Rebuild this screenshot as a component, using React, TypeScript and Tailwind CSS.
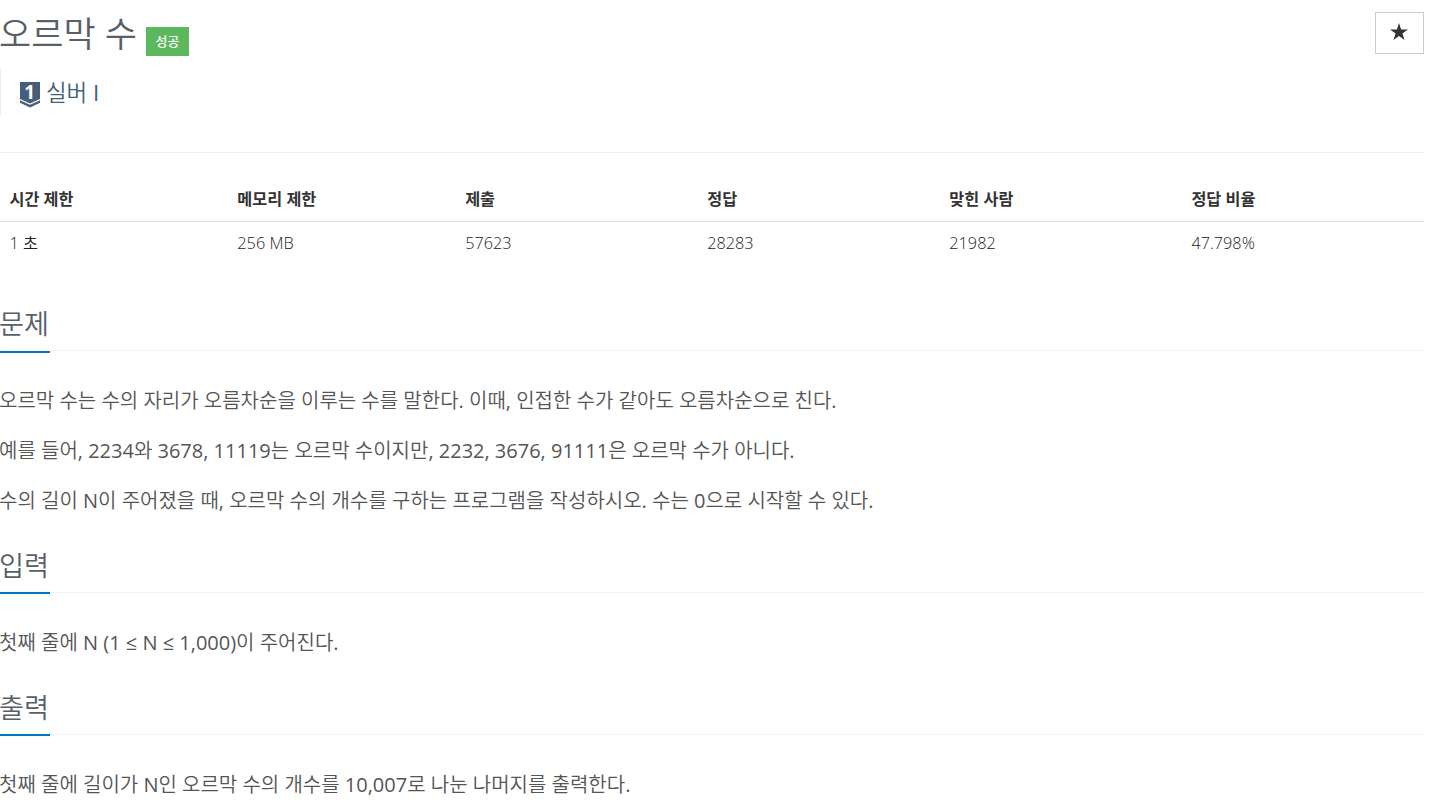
import React from "react";

interface Section {
  title: string;
  paragraphs: string[];
}

const stats = [
  { label: "시간 제한", value: "1 초", width: "w-[16%]" },
  { label: "메모리 제한", value: "256 MB", width: "w-[16%]" },
  { label: "제출", value: "57623", width: "w-[17%]" },
  { label: "정답", value: "28283", width: "w-[17%]" },
  { label: "맞힌 사람", value: "21982", width: "w-[17%]" },
  { label: "정답 비율", value: "47.798%", width: "w-[17%]" },
];

const sections: Section[] = [
  {
    title: "문제",
    paragraphs: [
      "오르막 수는 수의 자리가 오름차순을 이루는 수를 말한다. 이때, 인접한 수가 같아도 오름차순으로 친다.",
      "예를 들어, 2234와 3678, 11119는 오르막 수이지만, 2232, 3676, 91111은 오르막 수가 아니다.",
      "수의 길이 N이 주어졌을 때, 오르막 수의 개수를 구하는 프로그램을 작성하시오. 수는 0으로 시작할 수 있다.",
    ],
  },
  {
    title: "입력",
    paragraphs: ["첫째 줄에 N (1 ≤ N ≤ 1,000)이 주어진다."],
  },
  {
    title: "출력",
    paragraphs: [
      "첫째 줄에 길이가 N인 오르막 수의 개수를 10,007로 나눈 나머지를 출력한다.",
    ],
  },
];

function TierIcon() {
  return (
    <svg className="mt-[4px] h-[26px] w-5 shrink-0 overflow-visible" viewBox="0 0 20 26">
      <path d="M0 0h20v17l-10 4.5L0 17z" fill="#435f7a" />
      <path d="M0 18.2l10 4.5 10-4.5v2.6L10 25.6 0 20.8z" fill="#435f7a" />
      <text
        x="9.6"
        y="17"
        textAnchor="middle"
        fill="#fff"
        fontSize="19"
        fontWeight="700"
        fontFamily="Open Sans, sans-serif"
      >
        1
      </text>
    </svg>
  );
}

function ProblemSection({ title, paragraphs }: Section) {
  return (
    <section className="group">
      <div className="flex h-[50px] border-b border-dotted border-[#e4e9f0]">
        <h2 className="h-[51px] shrink-0 border-b-2 border-[#0076c0] text-[27.2px] leading-[46px] text-[#585f69] group-first:h-[52px]">
          <span className="-ml-px mr-px">{title}</span>
        </h2>
      </div>
      <div className="mb-[26px] -ml-px pt-[33px] text-[20px] text-[#555]">
        {paragraphs.map((text) => (
          <p key={text} className="mb-[17px] leading-[33px] last:mb-0">
            {text}
          </p>
        ))}
      </div>
    </section>
  );
}

export default function App() {
  return (
    <main className="h-[811px] w-[1424px] overflow-hidden bg-white font-['Open_Sans','Noto_Sans_CJK_KR_DemiLight','Noto_Sans_CJK_KR',sans-serif] font-normal text-[#333]">
      <header className="flex h-[153px] justify-between border-b border-[#eee]">
        <div>
          <div className="flex h-[69px] items-start">
            <h1 className="-ml-px pt-[10px] text-[35px] leading-[48px] text-[#585f69]">
              오르막 수
            </h1>
            <span className="mt-[27px] ml-[9px] flex h-[29px] w-[43px] items-center justify-center bg-[#5cb85c] font-['Open_Sans','Noto_Sans_CJK_KR',sans-serif] text-[13px] font-medium text-white">
              성공
            </span>
          </div>
          <div className="flex h-[47px] items-center border-l border-[#eee] pl-[19px] text-[22.4px] text-[#435f7a]">
            <TierIcon />
            <span className="ml-[6px]">실버 I</span>
          </div>
        </div>
        <button className="mt-3 flex h-[42px] w-[49px] items-center justify-center border border-[#ccc] bg-white pr-[2px] pb-1">
          <svg className="h-[17px] w-[18px]" viewBox="0 0 18 17" fill="#333">
            <path d="M9 0l2.1 6.4H18l-5.6 4 2.2 6.6L9 13l-5.6 4 2.2-6.6L0 6.4h6.9z" />
          </svg>
        </button>
      </header>

      <table className="mt-[25px] w-full table-fixed text-left text-[16.25px] leading-[23px]">
        <thead className="font-['Open_Sans','Noto_Sans_CJK_KR',sans-serif]">
          <tr className="border-b border-[#ddd]">
            {stats.map((stat) => (
              <th key={stat.label} className={`${stat.width} py-[10px] pl-[9.5px] font-bold`}>
                {stat.label}
              </th>
            ))}
          </tr>
        </thead>
        <tbody className="font-light text-[#222]">
          <tr>
            {stats.map((stat) => (
              <td key={stat.label} className="py-[10px] pl-[9.5px]">
                {stat.value}
              </td>
            ))}
          </tr>
        </tbody>
      </table>

      <div className="mt-9">
        {sections.map((section) => (
          <ProblemSection key={section.title} {...section} />
        ))}
      </div>
    </main>
  );
}
